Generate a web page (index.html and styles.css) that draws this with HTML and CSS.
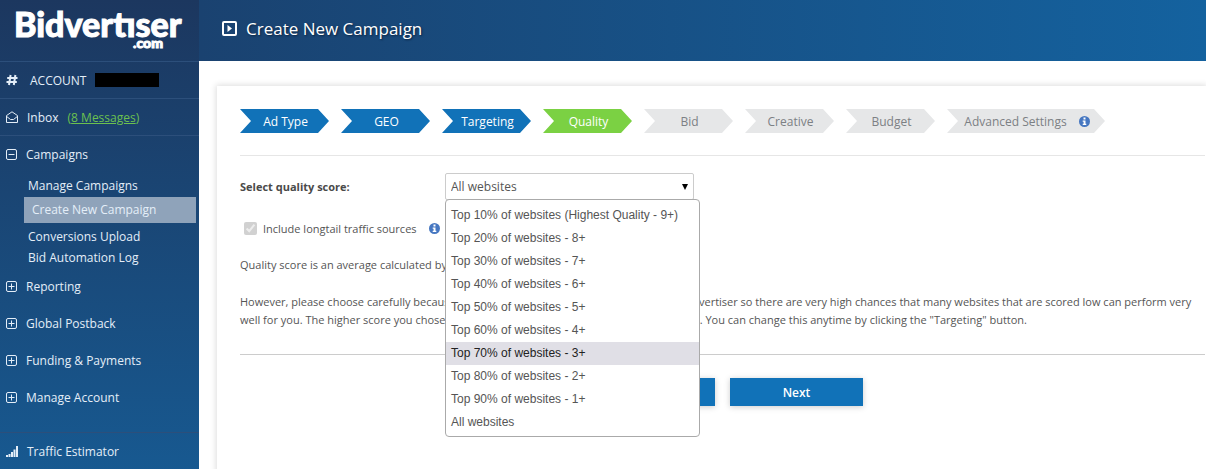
FILE: index.html
```html
<!DOCTYPE html>
<html lang="en">
<head>
    <meta charset="UTF-8">
    <meta name="viewport" content="width=device-width, initial-scale=1.0">
    <title>Create New Campaign - Bidvertiser</title>
    <link rel="stylesheet" href="styles.css">
</head>
<body>

<svg class="sprite" aria-hidden="true">
    <symbol id="plus" viewBox="0 0 11 11">
        <rect x=".5" y=".5" width="10" height="10" rx="1.5" fill="none" stroke="currentColor"/>
        <path d="M2.5 5.5h6M5.5 2.5v6" stroke="currentColor"/>
    </symbol>
    <symbol id="minus" viewBox="0 0 11 11">
        <rect x=".5" y=".5" width="10" height="10" rx="1.5" fill="none" stroke="currentColor"/>
        <path d="M2.5 5.5h6" stroke="currentColor"/>
    </symbol>
    <symbol id="info" viewBox="0 0 11 11">
        <circle cx="5.5" cy="5.5" r="5.5" fill="#4677c1"/>
        <path d="M4.5 1.5h2v2h-2zM3.7 4.4h2.8v3.4h.8v1.3H3.7V7.8h.9V5.7h-.9z" fill="#fff"/>
    </symbol>
</svg>

<div class="layout">
    <aside class="sidebar">
        <a href="#" class="logo">
            <span class="logo-name">Bidvertıser</span>
            <span class="logo-com">.com</span>
        </a>

        <div class="side-row">
            <svg class="icon-wide" viewBox="0 0 12 12"><path d="M4.6 1 3 11M9.4 1 7.8 11M1.2 4h10.3M.5 8h10.3" fill="none" stroke="currentColor" stroke-width="2"/></svg>
            <span class="account">ACCOUNT</span>
            <span class="redacted"></span>
        </div>
        <div class="side-row">
            <svg class="icon-wide" viewBox="0 0 12 12"><path d="M.5 4.6 6 .8l5.5 3.8v6.9H.5zM.8 5.6 4.5 8.5h3l3.7-2.9" fill="none" stroke="currentColor" stroke-linejoin="round"/></svg>
            <span>Inbox</span>
            <a href="#" class="messages">(<u>8 Messages</u>)</a>
        </div>

        <nav class="menu">
            <a href="#" class="menu-item"><svg class="icon"><use href="#minus"/></svg>Campaigns</a>
            <ul class="submenu">
                <li><a href="#">Manage Campaigns</a></li>
                <li class="active"><a href="#">Create New Campaign</a></li>
                <li><a href="#">Conversions Upload</a></li>
                <li><a href="#">Bid Automation Log</a></li>
            </ul>
            <a href="#" class="menu-item"><svg class="icon"><use href="#plus"/></svg>Reporting</a>
            <a href="#" class="menu-item"><svg class="icon"><use href="#plus"/></svg>Global Postback</a>
            <a href="#" class="menu-item"><svg class="icon"><use href="#plus"/></svg>Funding &amp; Payments</a>
            <a href="#" class="menu-item"><svg class="icon"><use href="#plus"/></svg>Manage Account</a>
        </nav>

        <a href="#" class="side-row">
            <svg class="icon-wide" viewBox="0 0 12 12"><path d="M0 10h2v2H0zM2.5 9h2v3h-2zM5 7h2v5H5zM7.5 4.5h2V12h-2zM10 1h2v11h-2z" fill="currentColor"/></svg>
            <span>Traffic Estimator</span>
        </a>
    </aside>

    <main class="main">
        <header class="topbar">
            <svg class="icon-title" viewBox="0 0 15 15"><rect x="1" y="1" width="13" height="13" rx="1" fill="none" stroke="currentColor" stroke-width="2"/><path d="M5.5 4v7L10 7.5z" fill="currentColor"/></svg>
            <h1>Create New Campaign</h1>
        </header>

        <section class="card">
            <ol class="steps">
                <li class="step done">Ad Type</li>
                <li class="step done">GEO</li>
                <li class="step done">Targeting</li>
                <li class="step current">Quality</li>
                <li class="step">Bid</li>
                <li class="step">Creative</li>
                <li class="step">Budget</li>
                <li class="step wide">Advanced Settings <svg class="icon"><use href="#info"/></svg></li>
            </ol>

            <form class="quality">
                <div class="field">
                    <label for="score">Select quality score:</label>
                    <div class="dropdown">
                        <select id="score">
                            <option>All websites</option>
                        </select>
                        <ul class="options" role="listbox" aria-label="Quality score">
                            <li role="option">Top 10% of websites (Highest Quality - 9+)</li>
                            <li role="option">Top 20% of websites - 8+</li>
                            <li role="option">Top 30% of websites - 7+</li>
                            <li role="option">Top 40% of websites - 6+</li>
                            <li role="option">Top 50% of websites - 5+</li>
                            <li role="option">Top 60% of websites - 4+</li>
                            <li role="option" class="hover">Top 70% of websites - 3+</li>
                            <li role="option">Top 80% of websites - 2+</li>
                            <li role="option">Top 90% of websites - 1+</li>
                            <li role="option">All websites</li>
                        </ul>
                    </div>
                </div>

                <div class="check">
                    <input type="checkbox" id="longtail" checked disabled>
                    <label for="longtail">Include longtail traffic sources</label>
                    <svg class="icon"><use href="#info"/></svg>
                </div>

                <p>Quality score is an average calculated by all campaigns.</p>
                <p>However, please choose carefully because the score is an average of all campaigns for Bidvertiser so there are very high chances that many websites that are scored low can perform very
                well for you. The higher score you chose the less traffic you are going to receive from here. You can change this anytime by clicking the "Targeting" button.</p>

                <div class="buttons">
                    <button type="button">Back</button>
                    <button type="button">Next</button>
                </div>
            </form>
        </section>
    </main>
</div>

</body>
</html>
```
FILE: styles.css
```css
* {
    box-sizing: border-box;
}

body {
    margin: 0;
    font-family: "Open Sans", Arial, sans-serif;
    font-size: 12px;
    color: #555;
    background: #fff;
}

ul, ol {
    list-style: none;
    margin: 0;
    padding: 0;
}

.sprite {
    display: none;
}

.icon {
    width: 11px;
    height: 11px;
    flex: none;
}

.icon-wide {
    width: 12px;
    height: 12px;
    flex: none;
}

.layout {
    display: flex;
    min-height: 100vh;
}

/* sidebar */
.sidebar {
    flex: 0 0 199px;
    color: #e4eef8;
    background: linear-gradient(#1c375f, #175a92);
}

.sidebar a {
    color: inherit;
    text-decoration: none;
}

.sidebar .logo {
    display: flex;
    flex-direction: column;
    height: 61px;
    padding: 7px 16px 0 14px;
    color: #fff;
    font-family: Lato, sans-serif;
    font-weight: 900;
    -webkit-text-stroke: 1px #fff;
}

.logo-name {
    font-size: 34px;
    line-height: 34px;
}

.logo-com {
    align-self: flex-end;
    margin: -5px 20px 0 0;
    font-size: 14px;
    line-height: 14px;
}

.side-row {
    display: flex;
    align-items: center;
    gap: 9px;
    height: 37px;
    padding-left: 6px;
    border-top: 1px solid #2c4f7b;
}

.account {
    padding-left: 3px;
}

.redacted {
    width: 64px;
    height: 14px;
    background: #000;
}

.sidebar .messages {
    color: #6cc04f;
}

.menu {
    padding-bottom: 16px;
    border-top: 1px solid #2c4f7b;
}

.menu-item {
    display: flex;
    align-items: center;
    gap: 9px;
    height: 37px;
    padding-left: 6px;
}

.submenu {
    padding: 2px 3px 0 24px;
}

.submenu li {
    padding-left: 4px;
    line-height: 21px;
}

.submenu .active {
    margin: 1px 0 3px;
    padding-left: 8px;
    line-height: 26px;
    background: #8fa3ba;
}

/* main */
.main {
    flex: 1;
    min-width: 0;
    overflow: hidden;
}

.topbar {
    display: flex;
    align-items: center;
    gap: 9px;
    height: 61px;
    padding: 0 23px 4px;
    color: #fff;
    background: linear-gradient(to right, #1a4270, #14629f);
}

.topbar h1 {
    margin: 0;
    font-size: 17px;
    font-weight: 400;
    text-shadow: 1px 1px 2px #0a2340;
}

.icon-title {
    width: 15px;
    height: 15px;
}

.card {
    margin: 25px 0 0 18px;
    padding: 23px 1px 80px 23px;
    box-shadow: 0 0 6px 1px #ddd;
}

.steps {
    display: flex;
    gap: 12px;
    padding-bottom: 22px;
    border-bottom: 1px solid #e6e6e6;
}

.step {
    display: flex;
    align-items: center;
    justify-content: center;
    width: 89px;
    height: 24px;
    padding-left: 2px;
    color: #7c8084;
    background: #e6e7e8;
    clip-path: polygon(0 0, calc(100% - 11px) 0, 100% 50%, calc(100% - 11px) 100%, 0 100%, 11px 50%);
}

.step.done {
    color: #fff;
    background: #1172b8;
}

.step.current {
    color: #fff;
    background: #7bd143;
}

.step.wide {
    gap: 12px;
    width: 158px;
}

.quality {
    padding-top: 17px;
    font-size: 11px;
}

.field {
    display: flex;
    align-items: center;
}

.field label {
    width: 205px;
    font-weight: 700;
    color: #4a4a4a;
}

.dropdown {
    position: relative;
}

.dropdown select {
    display: block;
    width: 249px;
    height: 27px;
    padding: 0 5px;
    font-family: inherit;
    font-size: 12px;
    color: #555;
    border: 1px solid #ccc;
    border-radius: 2px;
    appearance: none;
    background: #fff;
}

.dropdown::before {
    content: "";
    position: absolute;
    top: 11px;
    right: 6px;
    border: 3px solid transparent;
    border-top: 6px solid #000;
    border-bottom: 0;
}

.options {
    position: absolute;
    z-index: 1;
    top: 26px;
    left: 0;
    width: 255px;
    padding: 4px 0 2px;
    font-family: "Liberation Sans", Arial, sans-serif;
    font-size: 12px;
    line-height: 23px;
    background: #fff;
    border: 1px solid #aaa;
    border-radius: 4px;
}

.options li {
    padding-left: 5px;
}

.options .hover {
    color: #222;
    background: #e0dfe6;
}

.check {
    display: flex;
    align-items: center;
    height: 16px;
    margin: 20px 0;
}

.check input {
    width: 13px;
    height: 13px;
    margin: 0 6px 0 4px;
}

.check label {
    margin-right: 12px;
}

.quality p {
    margin: 0 0 19px;
    line-height: 18px;
}

.buttons {
    display: flex;
    justify-content: center;
    gap: 15px;
    margin-top: 25px;
    padding-top: 23px;
    border-top: 1px solid #ccc;
}

.buttons button {
    width: 133px;
    height: 28px;
    color: #fff;
    font-family: inherit;
    font-size: 12px;
    font-weight: 600;
    background: #1172b8;
    border: 0;
    box-shadow: 0 1px 6px #ccc;
}
```
